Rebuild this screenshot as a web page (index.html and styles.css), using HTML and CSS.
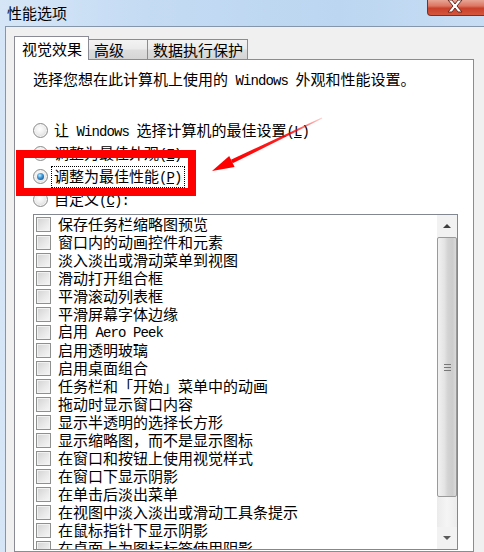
FILE: index.html
```html
<!DOCTYPE html>
<html lang="zh-CN">
<head>
<meta charset="utf-8">
<title>性能选项</title>
<link rel="stylesheet" href="styles.css">
</head>
<body>
<div class="window">
  <div class="titlebar">
    <span class="title">性能选项</span>
    <div class="close">
      <svg width="58" height="17" viewBox="0 0 58 17">
        <path d="M25 0 L28 4 L31 0 L35 0 L30 6 L35 12 L31 12 L28 8 L25 12 L21 12 L26 6 L21 0 Z" fill="#ffffff" stroke="#6b2a22" stroke-width="1"/>
      </svg>
    </div>
  </div>
  <div class="client">
    <div class="tabs">
      <div class="tab active">视觉效果</div>
      <div class="tab t2">高级</div>
      <div class="tab t3">数据执行保护</div>
    </div>
    <div class="panel">
      <p class="desc">选择您想在此计算机上使用的<span class="lat"> Windows </span>外观和性能设置。</p>
      <div class="radios">
        <div class="radio-row"><span class="radio"></span><span class="label">让<span class="lat"> Windows </span>选择计算机的最佳设置<span class="lat">(<u>L</u>)</span></span></div>
        <div class="radio-row"><span class="radio"></span><span class="label">调整为最佳外观<span class="lat">(<u>E</u>)</span></span></div>
        <div class="radio-row"><span class="radio on"></span><span class="label focus">调整为最佳性能<span class="lat">(<u>P</u>)</span></span></div>
        <div class="radio-row"><span class="radio"></span><span class="label">自定义<span class="lat">(<u>C</u>):</span></span></div>
      </div>
      <div class="listbox">
        <div class="items">
          <div class="item"><span class="cb"></span><span class="txt">保存任务栏缩略图预览</span></div>
          <div class="item"><span class="cb"></span><span class="txt">窗口内的动画控件和元素</span></div>
          <div class="item"><span class="cb"></span><span class="txt">淡入淡出或滑动菜单到视图</span></div>
          <div class="item"><span class="cb"></span><span class="txt">滑动打开组合框</span></div>
          <div class="item"><span class="cb"></span><span class="txt">平滑滚动列表框</span></div>
          <div class="item"><span class="cb"></span><span class="txt">平滑屏幕字体边缘</span></div>
          <div class="item"><span class="cb"></span><span class="txt">启用<span class="lat"> Aero Peek</span></span></div>
          <div class="item"><span class="cb"></span><span class="txt">启用透明玻璃</span></div>
          <div class="item"><span class="cb"></span><span class="txt">启用桌面组合</span></div>
          <div class="item"><span class="cb"></span><span class="txt">任务栏和「开始」菜单中的动画</span></div>
          <div class="item"><span class="cb"></span><span class="txt">拖动时显示窗口内容</span></div>
          <div class="item"><span class="cb"></span><span class="txt">显示半透明的选择长方形</span></div>
          <div class="item"><span class="cb"></span><span class="txt">显示缩略图，而不是显示图标</span></div>
          <div class="item"><span class="cb"></span><span class="txt">在窗口和按钮上使用视觉样式</span></div>
          <div class="item"><span class="cb"></span><span class="txt">在窗口下显示阴影</span></div>
          <div class="item"><span class="cb"></span><span class="txt">在单击后淡出菜单</span></div>
          <div class="item"><span class="cb"></span><span class="txt">在视图中淡入淡出或滑动工具条提示</span></div>
          <div class="item"><span class="cb"></span><span class="txt">在鼠标指针下显示阴影</span></div>
          <div class="item"><span class="cb"></span><span class="txt">在桌面上为图标标签使用阴影</span></div>
        </div>
        <div class="scrollbar">
          <div class="sb-btn"><span class="tri-up"></span></div>
          <div class="thumb"><span class="grip"></span></div>
          <div class="sb-track"></div>
          <div class="sb-btn"><span class="tri-down"></span></div>
        </div>
      </div>
    </div>
  </div>
  <div class="redbox"></div>
  <svg class="arrow" width="484" height="552" viewBox="0 0 484 552">
    <defs>
      <linearGradient id="fade" gradientUnits="userSpaceOnUse" x1="323" y1="118" x2="232" y2="161">
        <stop offset="0" stop-color="#ff0000" stop-opacity="0.15"/>
        <stop offset="0.35" stop-color="#ff0000" stop-opacity="0.85"/>
        <stop offset="1" stop-color="#ff0000" stop-opacity="1"/>
      </linearGradient>
    </defs>
    <polygon points="232.7,163.3 230.9,159.7 321.8,117.5 322.3,118.5" fill="url(#fade)"/>
    <polygon points="212,171 229.2,156.1 234.6,167.1" fill="#ff0000"/>
  </svg>
</div>
</body>
</html>
```
FILE: styles.css
```css
html, body {
  margin: 0;
  padding: 0;
}
body {
  width: 484px;
  height: 552px;
  overflow: hidden;
  font-family: "Noto Sans CJK SC", "Liberation Sans", sans-serif;
  font-size: 15px;
  color: #000;
}
.window {
  position: relative;
  width: 484px;
  height: 552px;
  overflow: hidden;
  background: linear-gradient(to right, #d6e6f7 0%, #c4dbf3 30%, #bcd6f1 70%, #c7ddf3 100%);
  display: flex;
  flex-direction: column;
}
.titlebar {
  height: 26px;
  flex: none;
  display: flex;
  justify-content: space-between;
  align-items: flex-start;
}
.title {
  margin: 4px 0 0 7px;
  line-height: 18px;
  font-size: 15px;
  color: #000;
}
.close {
  width: 58px;
  height: 16px;
  margin-right: -1px;
  box-sizing: border-box;
  border: 1px solid #7a2e24;
  border-top: none;
  border-radius: 0 0 0 4px;
  background: linear-gradient(to bottom, #e8a595 0%, #dc7562 40%, #c9412a 55%, #d4563c 100%);
  overflow: hidden;
}
.close svg {
  display: block;
  margin-left: -1px;
}
.client {
  flex: 1;
  margin-left: 5px;
  border-top: 1px solid #8596aa;
  border-left: 1px solid #8596aa;
  background: #f0f0f0;
  padding: 9px 0 0 8px;
  display: flex;
  flex-direction: column;
}
.tabs {
  display: flex;
  align-items: flex-end;
  margin-bottom: -1px;
  position: relative;
  z-index: 1;
}
.tab {
  box-sizing: border-box;
  height: 21px;
  line-height: 19px;
  border: 1px solid #898c95;
  border-left: none;
  padding: 0 2px 0 5px;
  background: linear-gradient(to bottom, #f3f3f3 0%, #ebebeb 45%, #dddddd 55%, #d5d5d5 100%);
  white-space: nowrap;
}
.tab.active {
  height: 24px;
  line-height: 23px;
  border-left: 1px solid #898c95;
  border-bottom: none;
  padding: 0 7px;
  background: #ffffff;
  width: 75px;
}
.tab.t2 {
  width: 59px;
}
.tab.t3 {
  width: 100px;
}
.panel {
  width: 460px;
  flex: 1;
  box-sizing: border-box;
  border: 1px solid #898c95;
  background: #ffffff;
  padding: 9px 0 0 18px;
}
.desc {
  margin: 0;
  line-height: 20px;
  white-space: nowrap;
}
.lat {
  font-family: "Liberation Mono", monospace;
  font-size: 14px;
  letter-spacing: -0.9px;
}
.radios {
  margin-top: 28px;
  display: flex;
  flex-direction: column;
}
.radio-row {
  height: 23px;
  display: flex;
  align-items: center;
  white-space: nowrap;
}
.radio {
  flex: none;
  width: 13px;
  height: 13px;
  border: 1px solid #8c8c8c;
  border-radius: 50%;
  background: radial-gradient(circle at 45% 40%, #ffffff 0%, #f0f0f0 40%, #cfcfcf 100%);
  box-shadow: inset 0 0 0 1px #f6f6f6;
  margin-right: 3px;
  position: relative;
}
.radio.on::after {
  content: "";
  position: absolute;
  left: 3px;
  top: 3px;
  width: 7px;
  height: 7px;
  border-radius: 50%;
  background: radial-gradient(circle at 40% 35%, #c8ecff 0%, #4aa3e0 35%, #1b5a9c 75%, #10386a 100%);
}
.label {
  padding: 0 2px;
  line-height: 18px;
  border: 1px solid transparent;
}
.label.focus {
  border: 1px dotted #000;
}
.listbox {
  margin-top: 3px;
  width: 425px;
  height: 336px;
  box-sizing: border-box;
  border: 1px solid #828790;
  display: flex;
  overflow: hidden;
}
.items {
  flex: 1;
  overflow: hidden;
}
.item {
  height: 18px;
  display: flex;
  align-items: center;
  padding-left: 2px;
  white-space: nowrap;
  line-height: 18px;
}
.txt {
  white-space: pre;
}
.cb {
  flex: none;
  width: 13px;
  height: 13px;
  border: 1px solid #8e8f8f;
  background: linear-gradient(135deg, #d2d2d2 0%, #e6e6e6 50%, #f7f7f7 100%);
  box-shadow: inset 0 0 0 1px #f2f2f2;
  margin-right: 7px;
}
.scrollbar {
  flex: none;
  width: 20px;
  display: flex;
  flex-direction: column;
  background: linear-gradient(to right, #ebebeb, #f5f5f5 50%, #ececec);
}
.sb-btn {
  height: 22px;
  flex: none;
  display: flex;
  align-items: center;
  justify-content: center;
  background: #f2f2f2;
}
.tri-up {
  width: 0;
  height: 0;
  border-left: 4px solid transparent;
  border-right: 4px solid transparent;
  border-bottom: 4px solid #3f3f3f;
}
.tri-down {
  width: 0;
  height: 0;
  border-left: 4px solid transparent;
  border-right: 4px solid transparent;
  border-top: 4px solid #5a5a5a;
}
.thumb {
  flex: none;
  height: 260px;
  box-sizing: border-box;
  border: 1px solid #9a9a9a;
  border-radius: 2px;
  background: linear-gradient(to right, #f1f1f1 0%, #e4e4e4 35%, #d3d3d3 55%, #cdcdcd 80%, #dadada 100%);
  display: flex;
  align-items: center;
  justify-content: center;
}
.grip {
  width: 7px;
  height: 7px;
  background: linear-gradient(to bottom, #777 0 1px, transparent 1px 3px, #777 3px 4px, transparent 4px 6px, #777 6px 7px);
}
.sb-track {
  flex: 1;
}
.redbox {
  position: absolute;
  left: 16px;
  top: 150px;
  width: 180px;
  height: 46px;
  box-sizing: border-box;
  border: 8px solid #ff0000;
}
.arrow {
  position: absolute;
  left: 0;
  top: 0;
}
```
